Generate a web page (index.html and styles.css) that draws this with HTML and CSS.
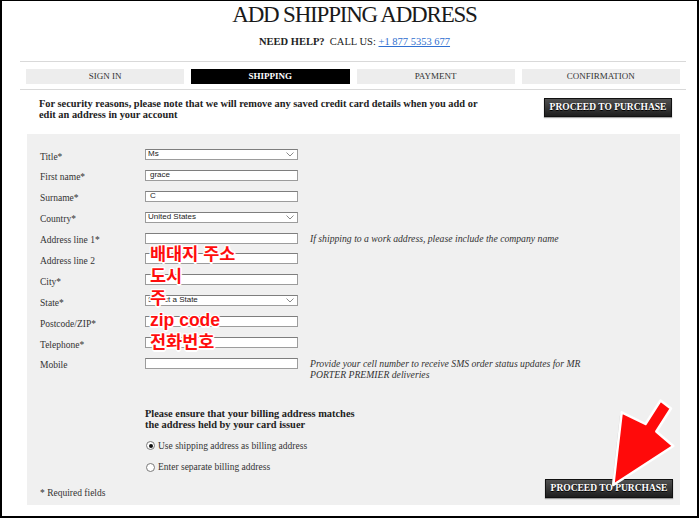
FILE: index.html
```html
<!DOCTYPE html>
<html lang="en">
<head>
<meta charset="utf-8">
<title>Add Shipping Address</title>
<link rel="stylesheet" href="styles.css">
</head>
<body>
<div class="frame">
  <header class="head">
    <h1 class="title">ADD SHIPPING ADDRESS</h1>
    <p class="help"><b>NEED HELP?</b>&nbsp; CALL US: <a href="#">+1 877 5353 677</a></p>
  </header>

  <nav class="steps">
    <div class="step">SIGN IN</div>
    <div class="step active">SHIPPING</div>
    <div class="step">PAYMENT</div>
    <div class="step">CONFIRMATION</div>
  </nav>

  <div class="notice">
    <p>For security reasons, please note that we will remove any saved credit card details when you add or<br>edit an address in your account</p>
    <button class="btn" type="button">PROCEED TO PURCHASE</button>
  </div>

  <form class="panel">
    <div class="rows">
      <div class="row"><label>Title*</label><div class="field select"><span>Ms</span><svg class="chev" viewBox="0 0 8 5" width="8" height="5"><path d="M0.5 0.5 L4 4 L7.5 0.5" fill="none" stroke="#8a8a8a" stroke-width="1"/></svg></div></div>
      <div class="row"><label>First name*</label><div class="field"><span>grace</span></div></div>
      <div class="row"><label>Surname*</label><div class="field"><span>C</span></div></div>
      <div class="row"><label>Country*</label><div class="field select"><span>United States</span><svg class="chev" viewBox="0 0 8 5" width="8" height="5"><path d="M0.5 0.5 L4 4 L7.5 0.5" fill="none" stroke="#8a8a8a" stroke-width="1"/></svg></div></div>
      <div class="row"><label>Address line 1*</label><div class="field"></div><p class="hint">If shipping to a work address, please include the company name</p></div>
      <div class="row"><label>Address line 2</label><div class="field"></div></div>
      <div class="row"><label>City*</label><div class="field"></div></div>
      <div class="row"><label>State*</label><div class="field select"><span>Select a State</span><svg class="chev" viewBox="0 0 8 5" width="8" height="5"><path d="M0.5 0.5 L4 4 L7.5 0.5" fill="none" stroke="#8a8a8a" stroke-width="1"/></svg></div></div>
      <div class="row"><label>Postcode/ZIP*</label><div class="field"></div></div>
      <div class="row"><label>Telephone*</label><div class="field"></div></div>
      <div class="row"><label>Mobile</label><div class="field"></div><p class="hint">Provide your cell number to receive SMS order status updates for MR<br>PORTER PREMIER deliveries</p></div>
    </div>

    <div class="billing">
      <h3 class="billing-title">Please ensure that your billing address matches<br>the address held by your card issuer</h3>
      <div class="radio first"><span class="dot checked"></span>Use shipping address as billing address</div>
      <div class="radio"><span class="dot"></span>Enter separate billing address</div>
    </div>

    <div class="foot">
      <span class="req">* Required fields</span>
      <button class="btn" type="button">PROCEED TO PURCHASE</button>
    </div>

    <div class="annot">배대지 주소<br>도시<br>주<br>zip code<br>전화번호</div>
  </form>

  <svg class="arrow" viewBox="0 0 700 519" width="700" height="519">
    <polygon points="613.3,485 621.7,412.3 645.5,424 660.5,400.5 671,408.5 656.3,431.5 673.3,446" fill="#c8c8c8" transform="translate(-1.5,1)"/>
    <polygon points="613.3,485 621.7,412.3 645.5,424 660.5,400.5 671,408.5 656.3,431.5 673.3,446" fill="#ff0a0a" stroke="#ffffff" stroke-width="2.5" stroke-linejoin="round"/>
  </svg>
</div>
</body>
</html>
```

FILE: styles.css
```css
* {
  box-sizing: border-box;
  margin: 0;
  padding: 0;
}

html, body {
  background: #ffffff;
}

body {
  width: 700px;
  height: 519px;
  overflow: hidden;
  font-family: "Liberation Serif", "Times New Roman", serif;
  color: #222;
}

.frame {
  position: relative;
  width: 699px;
  height: 518px;
  border-style: solid;
  border-color: #000;
  border-width: 1px 2px 2px 2px;
}

.head {
  padding-left: 10px;
  text-align: center;
}

.title {
  margin-top: 1px;
  font-size: 23px;
  line-height: 26px;
  font-weight: normal;
  letter-spacing: -1.2px;
  color: #1a1a1a;
}

.help {
  margin-top: 7px;
  font-size: 10.5px;
  line-height: 14px;
  color: #222;
}

.help a {
  color: #2f6fd0;
  text-decoration: underline;
}

.steps {
  margin: 12px 11px 0 18px;
  padding: 7px 6px 5px 6px;
  border-top: 1px solid #d9d9d9;
  border-bottom: 1px solid #d9d9d9;
  display: grid;
  grid-template-columns: repeat(4, 1fr);
  gap: 7px;
}

.step {
  height: 15px;
  background: #ededed;
  font-size: 9px;
  line-height: 15px;
  text-align: center;
  color: #333;
}

.step.active {
  background: #000;
  color: #fff;
  font-weight: bold;
}

.notice {
  height: 44px;
  display: flex;
  justify-content: space-between;
  align-items: flex-start;
  padding: 8px 25px 0 37px;
}

.notice p {
  margin-top: -0.5px;
  font-size: 10.4px;
  line-height: 11.5px;
  font-weight: bold;
  color: #222;
}

.btn {
  flex: none;
  width: 128px;
  height: 19px;
  background: linear-gradient(#505050, #1e1e1e);
  border: 1px solid #111;
  color: #fff;
  font-family: "Liberation Serif", "Times New Roman", serif;
  font-weight: bold;
  font-size: 9.5px;
  line-height: 17px;
  text-align: center;
  text-shadow: 0 1px 0 #000;
  box-shadow: 0 1px 1px rgba(0, 0, 0, 0.35);
}

.panel {
  position: relative;
  display: block;
  margin-left: 25px;
  width: 653px;
  background: #f0f0f0;
  padding: 15px 7px 7px 13px;
}

.row {
  display: flex;
  align-items: flex-start;
  height: 20.9px;
}

.row label {
  flex: none;
  width: 105px;
  margin-top: 2.5px;
  font-size: 9.5px;
  line-height: 11px;
  color: #333;
}

.field {
  flex: none;
  position: relative;
  width: 153px;
  height: 11px;
  background: #fff;
  border: 1px solid #9c9c9c;
  border-top-color: #7e7e7e;
  padding-left: 4px;
  font-family: "Liberation Sans", Arial, sans-serif;
  font-size: 8px;
  line-height: 8px;
  color: #222;
}

.field.select {
  padding-left: 2px;
}

.chev {
  position: absolute;
  right: 3px;
  top: 2px;
}

.hint {
  margin-left: 12px;
  font-style: italic;
  font-size: 9.7px;
  line-height: 11px;
  color: #333;
}

.billing {
  margin: 29.5px 0 0 105px;
}

.billing-title {
  font-size: 10.4px;
  line-height: 11px;
  font-weight: bold;
  color: #222;
}

.radio {
  display: flex;
  align-items: center;
  height: 14px;
  margin-top: 7.5px;
  font-size: 9.5px;
  color: #333;
}

.radio.first {
  margin-top: 8.5px;
}

.dot {
  position: relative;
  width: 9px;
  height: 9px;
  margin: 0 3px 0 1px;
  border: 1px solid #7a7a7a;
  border-radius: 50%;
  background: #fff;
}

.dot.checked::after {
  content: "";
  position: absolute;
  left: 1.5px;
  top: 1.5px;
  width: 4px;
  height: 4px;
  border-radius: 50%;
  background: #111;
}

.foot {
  display: flex;
  justify-content: space-between;
  align-items: flex-end;
  margin-top: 5px;
}

.req {
  margin-bottom: -2px;
  font-size: 9.5px;
  line-height: 13px;
  color: #333;
}

.annot {
  position: absolute;
  left: 123px;
  top: 109px;
  font-family: "Liberation Sans", "Noto Sans CJK KR", sans-serif;
  font-weight: bold;
  font-size: 17.5px;
  line-height: 22px;
  color: #ff0d0d;
  text-shadow:
    1px 1px 0 #fff, -1px -1px 0 #fff, 1px -1px 0 #fff, -1px 1px 0 #fff,
    0 1.5px 0 #fff, 0 -1.5px 0 #fff, 1.5px 0 0 #fff, -1.5px 0 0 #fff,
    0 0 3px #fff;
}

.arrow {
  position: absolute;
  left: -2px;
  top: -1px;
  pointer-events: none;
}
```
